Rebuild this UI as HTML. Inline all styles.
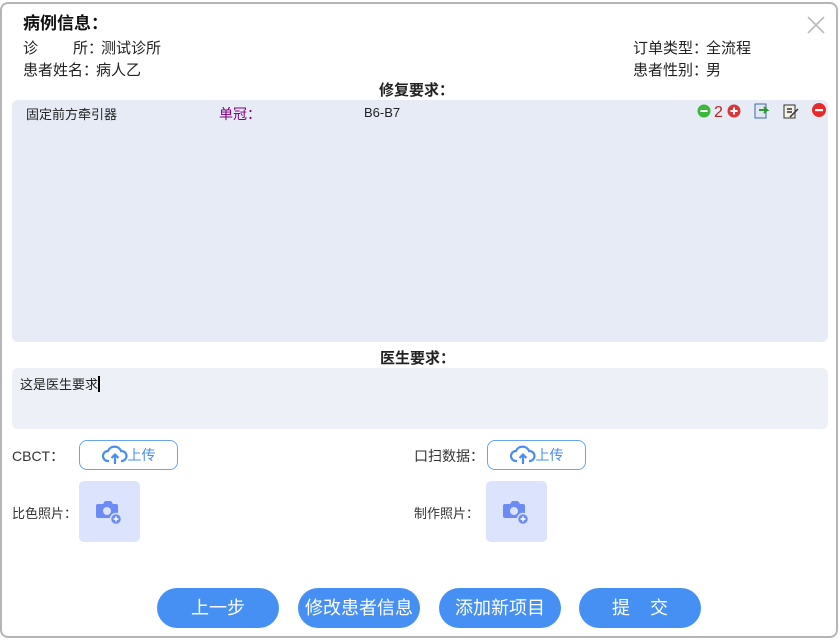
<!DOCTYPE html>
<html><head><meta charset="utf-8"><style>
*{margin:0;padding:0;box-sizing:border-box}
body{width:840px;height:640px;background:#fff;position:relative;overflow:hidden;font-family:"Liberation Sans","Noto Sans CJK SC",sans-serif;color:#222}
.frame{position:absolute;left:0;top:2px;width:838px;height:636px;border:2px solid #b5b5b8;border-radius:8px}
.a{position:absolute;white-space:nowrap}
.t{font-size:15px}
.up{position:absolute;width:99px;height:30px;border:1px solid #6aa3ef;border-radius:8px;color:#4a8df0;font-size:14px;display:flex;align-items:center;justify-content:center}
.ph{position:absolute;width:61px;height:61px;background:#dbe3fd;border-radius:5px}
.btn{position:absolute;top:588px;width:122px;height:40px;border-radius:20px;background:#4690f3;color:#fff;font-size:18px;text-align:center;line-height:40px}
</style></head><body>
<div class="frame"></div>
<svg class="a" style="left:806px;top:15px" width="20" height="20"><path d="M2 2L18 18M18 2L2 18" stroke="#bbb" stroke-width="1.6"/></svg>
<div class="a" style="left:23px;top:9px;font-size:17px;font-weight:bold;color:#111">病例信息：</div>
<div class="a t" style="left:23px;top:37px">诊<span style="display:inline-block;width:35px"></span>所：<span style="margin-left:-2px">测试诊所</span></div>
<div class="a t" style="left:23px;top:59px">患者姓名：<span style="margin-left:-2px">病人乙</span></div>
<div class="a t" style="left:633px;top:37px">订单类型：<span style="margin-left:-2px">全流程</span></div>
<div class="a t" style="left:633px;top:59px">患者性别：<span style="margin-left:-2px">男</span></div>
<div class="a" style="left:379px;top:79px;font-size:15px;font-weight:bold">修复要求：</div>
<div class="a" style="left:12px;top:100px;width:816px;height:242px;background:#e6ebf5;border-radius:6px"></div>
<div class="a" style="left:26px;top:104px;font-size:13px">固定前方牵引器</div>
<div class="a" style="left:219px;top:104px;font-size:14px;color:#800080">单冠：</div>
<div class="a" style="left:364px;top:105px;font-size:13px">B6-B7</div>
<svg class="a" style="left:696px;top:101px" width="135" height="20">
<circle cx="8" cy="10" r="6.5" fill="#3cb93c"/><rect x="4.5" y="9" width="7" height="2" fill="#fff"/>
<text x="18" y="16" font-size="16" fill="#b22" font-family="Liberation Sans">2</text>
<circle cx="38" cy="10" r="6.5" fill="#d9353a"/><path d="M34.5 10h7M38 6.5v7" stroke="#fff" stroke-width="2"/>
<rect x="59" y="3" width="11" height="14" fill="#dfe6f6" stroke="#4466aa"/><path d="M63 9h8l-3 -3M71 9l-3 3" stroke="#2a9a2a" stroke-width="2" fill="none"/>
<rect x="88" y="4" width="11" height="13" fill="#f4f0e6" stroke="#333"/><path d="M91 8h5M91 11h5M94 16l8-8" stroke="#333" stroke-width="1.5"/>
<circle cx="123" cy="9" r="7" fill="#e82a2a"/><rect x="119" y="8" width="8" height="2.2" fill="#fff"/>
</svg>
<div class="a" style="left:380px;top:347px;font-size:15px;font-weight:bold">医生要求：</div>
<div class="a" style="left:12px;top:368px;width:816px;height:61px;background:#edf1f7;border-radius:6px"></div>
<div class="a" style="left:20px;top:374px;font-size:13px">这是医生要求<span style="display:inline-block;width:1.5px;height:16px;background:#000;vertical-align:-3px"></span></div>
<div class="a" style="left:12px;top:446px;font-size:14px;color:#333">CBCT：</div>
<div class="up" style="left:79px;top:440px"><svg width="26" height="20" viewBox="0 0 26 20"><path d="M7 16H6a5 5 0 0 1 0-10a7 7 0 0 1 13 0a5 5 0 0 1 1 10h-1" fill="none" stroke="#4a8df0" stroke-width="2.2"/><path d="M13 19v-9M9.5 13l3.5-3.5l3.5 3.5" fill="none" stroke="#4a8df0" stroke-width="2.2"/></svg>上传</div>
<div class="a" style="left:414px;top:446px;font-size:14px;color:#333">口扫数据：</div>
<div class="up" style="left:487px;top:440px"><svg width="26" height="20" viewBox="0 0 26 20"><path d="M7 16H6a5 5 0 0 1 0-10a7 7 0 0 1 13 0a5 5 0 0 1 1 10h-1" fill="none" stroke="#4a8df0" stroke-width="2.2"/><path d="M13 19v-9M9.5 13l3.5-3.5l3.5 3.5" fill="none" stroke="#4a8df0" stroke-width="2.2"/></svg>上传</div>
<div class="a" style="left:12px;top:503px;font-size:13px;color:#333">比色照片：</div>
<div class="ph" style="left:79px;top:481px"><svg style="position:absolute;left:16px;top:17px" width="30" height="28"><path d="M3 6h5l2-3h6l2 3h3a2 2 0 0 1 2 2v10a2 2 0 0 1-2 2H3a2 2 0 0 1-2-2V8a2 2 0 0 1 2-2z" fill="#6c8bf5"/><circle cx="12" cy="13" r="4" fill="#dbe3fd"/><circle cx="21" cy="21" r="5.5" fill="#6c8bf5" stroke="#dbe3fd" stroke-width="1.5"/><path d="M18.5 21h5M21 18.5v5" stroke="#fff" stroke-width="1.5"/></svg></div>
<div class="a" style="left:414px;top:503px;font-size:13px;color:#333">制作照片：</div>
<div class="ph" style="left:486px;top:481px"><svg style="position:absolute;left:16px;top:17px" width="30" height="28"><path d="M3 6h5l2-3h6l2 3h3a2 2 0 0 1 2 2v10a2 2 0 0 1-2 2H3a2 2 0 0 1-2-2V8a2 2 0 0 1 2-2z" fill="#6c8bf5"/><circle cx="12" cy="13" r="4" fill="#dbe3fd"/><circle cx="21" cy="21" r="5.5" fill="#6c8bf5" stroke="#dbe3fd" stroke-width="1.5"/><path d="M18.5 21h5M21 18.5v5" stroke="#fff" stroke-width="1.5"/></svg></div>
<div class="btn" style="left:157px">上一步</div>
<div class="btn" style="left:298px">修改患者信息</div>
<div class="btn" style="left:439px">添加新项目</div>
<div class="btn" style="left:579px">提&nbsp;&nbsp;&nbsp;&nbsp;交</div>
</body></html>
